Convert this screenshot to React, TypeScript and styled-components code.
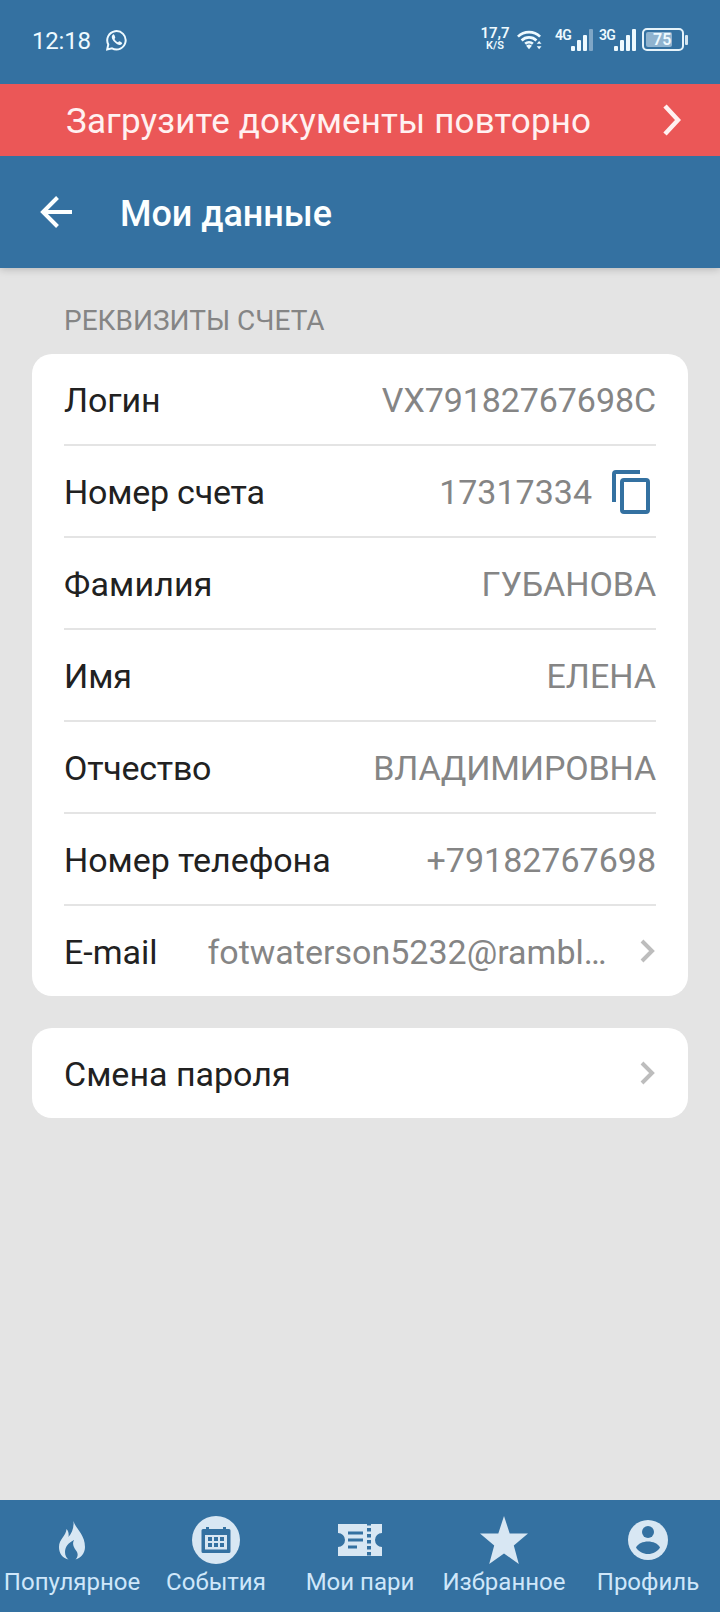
import React from 'react';
import styled, { createGlobalStyle } from 'styled-components';

const GlobalStyle = createGlobalStyle`
  * { box-sizing: border-box; }
  body { margin: 0; background: #e4e4e4; font-family: Roboto, sans-serif; }
`;

const Screen = styled.div`
  width: 720px;
  height: 1612px;
  display: flex;
  flex-direction: column;
  background: #e4e4e4;
  overflow: hidden;
`;

const StatusBar = styled.div`
  height: 84px;
  flex: none;
  display: flex;
  align-items: flex-start;
  justify-content: space-between;
  padding: 0 32px 0 32px;
  background: #3471a1;
  color: #eefaff;
`;

const StatusLeft = styled.div`
  display: flex;
  align-items: center;
  gap: 15px;
  height: 80px;
`;

const Clock = styled.span`
  font-size: 24px;
  line-height: 28px;
  padding-top: 1px;
  letter-spacing: -0.2px;
`;

const StatusRight = styled.div`
  display: flex;
  align-items: flex-start;
  padding-top: 25px;
`;

const NetSpeed = styled.div`
  display: flex;
  flex-direction: column;
  align-items: center;
  width: 28px;
  margin-right: 8px;
  padding-top: 1px;
  font-weight: 600;
`;

const SpeedValue = styled.span`
  font-size: 15px;
  line-height: 14px;
`;

const SpeedUnit = styled.span`
  font-size: 11px;
  line-height: 11px;
`;

const WifiIcon = styled.svg`
  margin: 4px 13px 0 0;
`;

const Signal = styled.div<{ $gap: number }>`
  display: flex;
  margin-right: ${(p) => p.$gap}px;
`;

const SignalLabel = styled.span<{ $width: number }>`
  width: ${(p) => p.$width}px;
  font-size: 14px;
  line-height: 16px;
  padding-top: 2px;
  font-weight: 600;
  letter-spacing: -0.7px;
`;

const SignalBars = styled.div`
  display: flex;
  align-items: flex-end;
  gap: 2px;
  height: 26px;
`;

const Bar = styled.span<{ $h: number; $dim?: boolean }>`
  width: 4px;
  height: ${(p) => p.$h}px;
  border-radius: 1px;
  background: ${(p) => (p.$dim ? '#7fa6c6' : '#eefaff')};
`;

const Battery = styled.div`
  display: flex;
  align-items: center;
  gap: 1px;
  margin-top: 3px;
`;

const BatteryBody = styled.div`
  width: 42px;
  height: 23px;
  padding: 2px;
  border: 2px solid #e6f3fa;
  border-radius: 5px;
`;

const BatteryFill = styled.div`
  width: 26px;
  height: 15px;
  padding-left: 7px;
  border-radius: 2px;
  background: #8fb3cf;
  font-size: 16px;
  line-height: 15px;
  font-weight: 600;
`;

const BatteryTip = styled.span`
  width: 3px;
  height: 10px;
  border-radius: 1px;
  background: #d5e5f0;
`;

const Banner = styled.div`
  height: 72px;
  flex: none;
  display: flex;
  align-items: center;
  justify-content: space-between;
  padding: 0 39px 0 66px;
  background: #eb5757;
  color: #fff1f1;
  font-size: 35px;
  line-height: 42px;
  letter-spacing: 0.15px;
  white-space: nowrap;
`;

const BannerText = styled.span`
  padding-top: 3px;
`;

const Toolbar = styled.header`
  height: 112px;
  flex: none;
  display: flex;
  align-items: center;
  gap: 48px;
  padding-left: 40px;
  background: #3471a1;
  box-shadow: 0 1px 8px rgba(0, 0, 0, 0.22);
  clip-path: inset(0 0 -12px 0);
`;

const BackIcon = styled.svg`
  flex: none;
`;

const Title = styled.h1`
  margin: 3px 0 0;
  color: #fcffff;
  font-size: 36px;
  line-height: 42px;
  font-weight: 500;
  letter-spacing: -0.05px;
`;

const Content = styled.main`
  flex: 1;
  display: flex;
  flex-direction: column;
  padding: 0 32px;
`;

const SectionTitle = styled.h2`
  height: 86px;
  margin: 0;
  padding: 36px 32px 0;
  color: #858585;
  font-size: 28px;
  line-height: 33px;
  font-weight: 400;
`;

const Card = styled.section`
  margin-bottom: 32px;
  padding: 0 32px;
  border-radius: 20px;
  background: #fff;
`;

const Row = styled.div`
  height: 90px;
  display: flex;
  align-items: center;
  justify-content: space-between;
  white-space: nowrap;
  font-size: 34px;
  line-height: 40px;

  & + & {
    height: 92px;
    border-top: 2px solid #e4e4e4;
  }
`;

const Label = styled.span<{ $tracking?: number }>`
  flex: none;
  padding-top: 2px;
  color: #212121;
  letter-spacing: ${(p) => p.$tracking ?? 0}px;
`;

const Value = styled.span<{ $tracking?: number }>`
  flex: 1;
  padding-top: 2px;
  text-align: right;
  color: #858585;
  letter-spacing: ${(p) => p.$tracking ?? 0}px;
`;

const RowIcon = styled.svg<{ $left: number; $right: number; $top?: number }>`
  flex: none;
  margin: ${(p) => p.$top ?? 0}px ${(p) => p.$right}px 0 ${(p) => p.$left}px;
`;

const TabBar = styled.nav`
  height: 112px;
  flex: none;
  display: grid;
  grid-template-columns: repeat(5, 1fr);
  background: #3471a1;
`;

const Tab = styled.a`
  display: flex;
  flex-direction: column;
  align-items: center;
  padding-top: 16px;
  color: #cfe7fa;
  font-size: 24px;
  line-height: 28px;
  white-space: nowrap;
`;

const TabIcon = styled.svg`
  margin-bottom: 4px;
  fill: #d8e7f3;
`;

const Chevron = ({ left = 0 }: { left?: number }) => (
  <RowIcon $left={left} $right={1} width="15" height="24" viewBox="0 0 15 24" fill="none">
    <path d="M2 2 L12 12 L2 22" stroke="#bdbdbd" strokeWidth="4" />
  </RowIcon>
);

const CopyIcon = () => (
  <RowIcon $left={20} $right={6} $top={2} width="38" height="44" viewBox="0 0 38 44" fill="none" stroke="#3471a1" strokeWidth="4">
    <path d="M28 2H4a2 2 0 0 0-2 2v28" />
    <rect x="10" y="10" width="26" height="32" rx="2" />
  </RowIcon>
);

const rows = [
  { label: 'Логин', labelTracking: -0.1, value: 'VX79182767698C', valueTracking: -0.08 },
  { label: 'Номер счета', labelTracking: -0.22, value: '17317334', icon: <CopyIcon /> },
  { label: 'Фамилия', labelTracking: 0.15, value: 'ГУБАНОВА', valueTracking: -0.06 },
  { label: 'Имя', labelTracking: -0.1, value: 'ЕЛЕНА' },
  { label: 'Отчество', labelTracking: -0.25, value: 'ВЛАДИМИРОВНА', valueTracking: -0.15 },
  { label: 'Номер телефона', labelTracking: -0.05, value: '+79182767698' },
  { label: 'E-mail', value: 'fotwaterson5232@rambl…', icon: <Chevron left={33.5} /> },
];

const tabs = [
  {
    label: 'Популярное',
    icon: <path d="M25.500 5C27 12 37 18 37 31C37 37 33 42 27.500 43.500C30 41 30.500 37.500 28 34.500C25.500 31 24 28 26 24C20 27 17 31 17 36C17 39.500 18.500 42 20.500 43.500C14 42 11 37 11 31C11 23 18 20 18.500 13C20.500 15 21 18 20.500 21C24 17 26 12 25.500 5Z" />,
  },
  {
    label: 'События',
    icon: (
      <>
        <circle cx="24" cy="24" r="24" />
        <path
          fill="#3471a1"
          fillRule="evenodd"
          d="M14 11h3v2h14v-2h3v2h3a1.500 1.500 0 0 1 1.500 1.500v21a1.500 1.500 0 0 1-1.500 1.500h-26a1.500 1.500 0 0 1-1.500-1.500v-21a1.500 1.500 0 0 1 1.500-1.500h3zM13 19v14.500h22V19z"
        />
        <path fill="#3471a1" d="M16 21h4v4h-4zM22 21h4v4h-4zM28 21h4v4h-4zM16 27h4v4h-4zM22 27h4v4h-4zM28 27h4v4h-4z" />
      </>
    ),
  },
  {
    label: 'Мои пари',
    icon: (
      <>
        <path d="M2 8H46V17A7 7 0 0 0 46 31V40H2V31A7 7 0 0 0 2 17Z" />
        <path stroke="#3471a1" strokeWidth="3" d="M12 17H27M12 24H27M12 31H21" />
        <path stroke="#3471a1" strokeWidth="4" strokeDasharray="3.500 2.500" strokeDashoffset="2" d="M33 8V40" />
      </>
    ),
  },
  {
    label: 'Избранное',
    icon: <path d="M24 0L29.700 17.500H48L33.800 29.500L38.800 48L24 37.500L9.200 48L14.200 29.500L0 17.500H18.300Z" />,
  },
  {
    label: 'Профиль',
    icon: (
      <>
        <circle cx="24" cy="24" r="20" />
        <circle cx="24" cy="16" r="6" fill="#3471a1" />
        <path d="M12 31.500C14 27.500 19 25.500 24 25.500S34 27.500 36 31.500C33.500 35.500 29 38 24 38S14.500 35.500 12 31.500Z" fill="#3471a1" />
      </>
    ),
  },
];

export default function App() {
  return (
    <Screen>
      <GlobalStyle />
      <StatusBar>
        <StatusLeft>
          <Clock>12:18</Clock>
          <svg width="22" height="22" viewBox="0 0 22 22" fill="none">
            <path d="M1.200 20.500L2.300 15.500A9.200 9.200 0 1 1 6 19.300Z" stroke="#eefaff" strokeWidth="2" />
            <path d="M7 5.500C5 7 5.500 10 8.500 13C11.500 16 14.500 16.800 16 14.700C16.500 14 16 13.500 13.500 12.300C12.500 12 12.500 13.500 11.800 13.300C10.500 12.700 9.300 11.500 8.600 10.200C8.500 9.500 9.500 9 9.200 8.200C8.400 6 8 5 7 5.500Z" fill="#eefaff" />
          </svg>
        </StatusLeft>
        <StatusRight>
          <NetSpeed>
            <SpeedValue>17,7</SpeedValue>
            <SpeedUnit>K/S</SpeedUnit>
          </NetSpeed>
          <WifiIcon width="25" height="22" viewBox="0 0 26 22" fill="none" stroke="#eefaff" strokeWidth="2.800">
            <path d="M1 7.500A16.500 16.500 0 0 1 24 7.500M4.800 11.500A11 11 0 0 1 20.200 11.500M8.500 15A6 6 0 0 1 16.500 15" />
            <path d="M9.500 17a4.500 4.500 0 0 1 6 0L12.500 20.500ZM20.500 15L23 12L25.500 15ZM20.500 17.500L23 20.500L25.500 17.500Z" fill="#eefaff" stroke="none" />
          </WifiIcon>
          <Signal $gap={6}>
            <SignalLabel $width={16}>4G</SignalLabel>
            <SignalBars>
              <Bar $h={5} /><Bar $h={11} /><Bar $h={16} /><Bar $h={22} $dim />
            </SignalBars>
          </Signal>
          <Signal $gap={6}>
            <SignalLabel $width={15}>3G</SignalLabel>
            <SignalBars>
              <Bar $h={5} /><Bar $h={11} /><Bar $h={16} /><Bar $h={22} />
            </SignalBars>
          </Signal>
          <Battery>
            <BatteryBody>
              <BatteryFill>75</BatteryFill>
            </BatteryBody>
            <BatteryTip />
          </Battery>
        </StatusRight>
      </StatusBar>
      <Banner>
        <BannerText>Загрузите документы повторно</BannerText>
        <svg width="18" height="32" viewBox="0 0 18 32" fill="none">
          <path d="M2 2L15 16L2 30" stroke="#fff1f1" strokeWidth="4.500" />
        </svg>
      </Banner>
      <Toolbar>
        <BackIcon width="32" height="32" viewBox="0 0 32 32" fill="none">
          <path d="M17.500 1.500L3 16L17.500 30.500M3 16H32" stroke="#fcffff" strokeWidth="4" />
        </BackIcon>
        <Title>Мои данные</Title>
      </Toolbar>
      <Content>
        <SectionTitle>РЕКВИЗИТЫ СЧЕТА</SectionTitle>
        <Card>
          {rows.map((row) => (
            <Row key={row.label}>
              <Label $tracking={row.labelTracking}>{row.label}</Label>
              <Value $tracking={row.valueTracking}>{row.value}</Value>
              {row.icon}
            </Row>
          ))}
        </Card>
        <Card>
          <Row>
            <Label>Смена пароля</Label>
            <Chevron />
          </Row>
        </Card>
      </Content>
      <TabBar>
        {tabs.map((tab) => (
          <Tab key={tab.label}>
            <TabIcon width="48" height="48" viewBox="0 0 48 48">{tab.icon}</TabIcon>
            {tab.label}
          </Tab>
        ))}
      </TabBar>
    </Screen>
  );
}
